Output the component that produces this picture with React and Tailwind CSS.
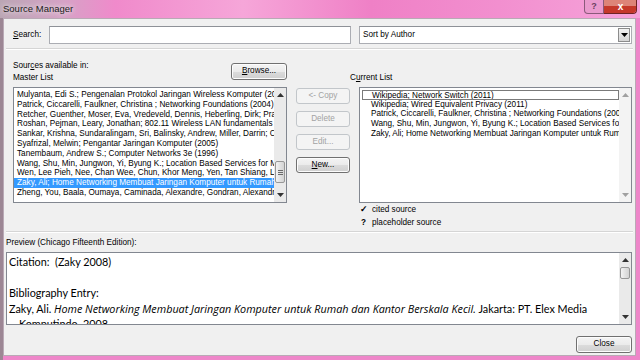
import React from "react";

const UI = { fontFamily: '"Liberation Sans", Arial, sans-serif' };
const PV = { fontFamily: 'Lato, "Open Sans", sans-serif' };
const PVI = { fontFamily: '"Open Sans", Lato, sans-serif' };

function Btn({ children, disabled, className = "" }) {
  return (
    <div
      className={
        "flex items-center justify-center rounded-[3px] border text-[8.2px] " +
        (disabled
          ? "border-[#c2c6ca] bg-[#f4f4f4] text-[#a3a3a3] "
          : "border-[#707070] bg-[linear-gradient(180deg,#f4f4f4_0%,#ebebeb_50%,#dcdcdc_51%,#cfcfcf_100%)] text-black shadow-[inset_0_0_0_1px_#fcfcfc] ") +
        className
      }
    >
      {children}
    </div>
  );
}

function Up({ color = "#333" }) {
  return (
    <svg width="7" height="4" viewBox="0 0 7 4">
      <path d="M0 4 L3.5 0 L7 4 Z" fill={color} />
    </svg>
  );
}
function Down({ color = "#333" }) {
  return (
    <svg width="7" height="4" viewBox="0 0 7 4">
      <path d="M0 0 L3.5 4 L7 0 Z" fill={color} />
    </svg>
  );
}

function Thumb({ h, grip }) {
  return (
    <div
      className="mx-[1px] flex items-center justify-center rounded-[2px] border border-[#979797] bg-[linear-gradient(90deg,#f3f3f3,#e2e2e2_50%,#d3d3d3)]"
      style={{ height: h }}
    >
      {grip && (
        <div className="flex flex-col gap-[1px]">
          <div className="h-[1px] w-[5px] bg-[#6a6a6a]" />
          <div className="h-[1px] w-[5px] bg-[#6a6a6a]" />
          <div className="h-[1px] w-[5px] bg-[#6a6a6a]" />
        </div>
      )}
    </div>
  );
}

const master = [
  "Mulyanta, Edi S.; Pengenalan Protokol Jaringan Wireless Komputer (2005)",
  "Patrick, Ciccarelli, Faulkner, Christina ; Networking Foundations (2004)",
  "Retcher, Guenther, Moser, Eva, Vredeveld, Dennis, Heberling, Dirk; Practical",
  "Roshan, Pejman, Leary, Jonathan; 802.11 Wireless LAN fundamentals (2004)",
  "Sankar, Krishna, Sundaralingam, Sri, Balinsky, Andrew, Miller, Darrin; Cisco",
  "Syafrizal, Melwin; Pengantar Jaringan Komputer (2005)",
  "Tanembaum, Andrew S.; Computer Networks 3e (1996)",
  "Wang, Shu, Min, Jungwon, Yi, Byung K.; Location Based Services for Mobiles",
  "Wen, Lee Pieh, Nee, Chan Wee, Chun, Khor Meng, Yen, Tan Shiang, Ling",
  "Zaky, Ali; Home Networking Membuat Jaringan Komputer untuk Rumah dan Kantor",
  "Zheng, You, Baala, Oumaya, Caminada, Alexandre, Gondran, Alexandre; Wireless",
];

const current = [
  "Wikipedia; Network Switch (2011)",
  "Wikipedia; Wired Equivalent Privacy (2011)",
  "Patrick, Ciccarelli, Faulkner, Christina ; Networking Foundations (2004)",
  "Wang, Shu, Min, Jungwon, Yi, Byung K.; Location Based Services for Mobiles",
  "Zaky, Ali; Home Networking Membuat Jaringan Komputer untuk Rumah",
];

export default function App() {
  return (
    <div
      className="flex h-[360px] w-[640px] flex-col overflow-hidden bg-[#ee86c9] text-black"
      style={UI}
    >
      {/* title bar */}
      <div className="flex h-[18px] shrink-0 items-start bg-[linear-gradient(90deg,#bba6b4_0%,#d6a2c6_10%,#f08acb_18%,#f6a6d9_38%,#ef80c6_58%,#f28fcf_78%,#f6a4da_100%)]">
        <div className="ml-[3px] mt-[3px] text-[9.5px] leading-[12px] text-[#1b1b1b] [text-shadow:0_0_4px_#e8e0e6,0_0_6px_#e8e0e6]">
          Source Manager
        </div>
        <div className="ml-auto mr-[3px] flex h-[14px] shrink-0">
          <div className="flex w-[20px] shrink-0 items-center justify-center rounded-bl-[4px] border border-t-0 border-[#8a5a7a] bg-[#e99acd] text-[9px] font-bold text-[#6a4060]">
            ?
          </div>
          <div className="flex w-[33px] shrink-0 flex-col overflow-hidden rounded-br-[4px] border border-l-0 border-t-0 border-[#6e2424]">
            <div className="h-[6px] bg-[#dd8478]" />
            <div className="flex-1 bg-[#c5382a]" />
          </div>
        </div>
      </div>
      <div className="relative -mt-[18px] flex h-[18px] shrink-0 justify-end pr-[3px]">
        <div className="flex h-[14px] w-[33px] items-center justify-center text-[10px] font-bold leading-[10px] text-white">
          x
        </div>
      </div>

      {/* body with frame */}
      <div className="flex min-h-0 flex-1">
        <div className="w-[3px] shrink-0 bg-[#9c8694]" />
        <div className="flex h-[338px] w-[633px] shrink-0 flex-col border border-[#b9a9b5] bg-[#f0f0f0]">
          {/* search row */}
          <div className="mt-[7px] flex h-[18px] items-center pl-[9px] pr-[3px]">
            <div className="w-[36px] text-[8.2px]">
              <span className="underline">S</span>earch:
            </div>
            <div className="h-[18px] w-[302px] border border-[#abadb3] border-t-[#8e9197] bg-white" />
            <div className="ml-[8px] flex h-[18px] w-[273px] items-center border border-[#abadb3] border-t-[#8e9197] bg-white">
              <div className="ml-[3px] flex-1 text-[8.2px]">Sort by Author</div>
              <div className="mr-[1px] flex h-[14px] w-[12px] items-center justify-center border border-[#8c8c8c] bg-[linear-gradient(180deg,#f2f2f2,#d5d5d5)]">
                <Down color="#000" />
              </div>
            </div>
          </div>

          <div className="mx-[2px] mt-[4px] h-[1px] bg-[#d5d5d5]" />
          <div className="mx-[2px] h-[1px] bg-white" />

          {/* header row */}
          <div className="flex h-[37px] pl-[9px] pr-[3px]">
            <div className="flex w-[274px] items-start">
              <div className="mt-[10px] text-[8.2px] leading-[12px]">
                <div>
                  Sour<span className="underline">c</span>es available in:
                </div>
                <div>Master List</div>
              </div>
              <Btn className="ml-auto mt-[13px] h-[17px] w-[56px]">
                <span>
                  <span className="underline">B</span>rowse...
                </span>
              </Btn>
            </div>
            <div className="w-[63px]" />
            <div className="flex w-[273px] items-end pb-[3px] text-[8.2px] leading-[12px]">
              <div>
                C<span className="underline">u</span>rrent List
              </div>
            </div>
          </div>

          {/* lists row */}
          <div className="flex h-[116px] pl-[9px] pr-[3px]">
            <div className="flex w-[274px] border border-[#828790] bg-white">
              <div className="min-w-0 flex-1 overflow-hidden pt-[2px]">
                {master.map((t, i) => (
                  <div
                    key={i}
                    className={
                      "h-[9.8px] overflow-hidden whitespace-nowrap pl-[3px] text-[8.2px] leading-[9.8px] " +
                      (i === 9 ? "bg-[#3399ff] text-white" : "")
                    }
                  >
                    {t}
                  </div>
                ))}
              </div>
              <div className="flex w-[12px] flex-col bg-[#eaeaea]">
                <div className="flex h-[14px] items-center justify-center">
                  <Up />
                </div>
                <div className="flex-1" />
                <div className="mb-[5px]">
                  <Thumb h={22} grip />
                </div>
                <div className="flex h-[14px] items-center justify-center">
                  <Down />
                </div>
              </div>
            </div>

            <div className="ml-[9px] flex w-[54px] flex-col pt-[1px]">
              <Btn disabled className="h-[16px]">
                &lt;- Copy
              </Btn>
              <Btn disabled className="mt-[7px] h-[16px]">
                Delete
              </Btn>
              <Btn disabled className="mt-[7px] h-[16px]">
                Edit...
              </Btn>
              <Btn className="mt-[7px] h-[16px]">
                <span>
                  <span className="underline">N</span>ew...
                </span>
              </Btn>
            </div>

            <div className="ml-[9px] flex w-[273px] border border-[#828790] bg-white">
              <div className="min-w-0 flex-1 overflow-hidden pl-[2px] pt-[2px]">
                {current.map((t, i) => (
                  <div
                    key={i}
                    className={
                      "h-[9.7px] overflow-hidden whitespace-nowrap pl-[9px] text-[8.2px] leading-[9px] " +
                      (i === 0 ? "border border-[#7a7a7a] pl-[8px]" : "")
                    }
                  >
                    {t}
                  </div>
                ))}
              </div>
              <div className="flex w-[12px] flex-col bg-[#f3f3f3]">
                <div className="flex h-[14px] items-center justify-center">
                  <Up color="#a0a0a0" />
                </div>
                <div className="flex-1" />
                <div className="flex h-[14px] items-center justify-center">
                  <Down color="#a0a0a0" />
                </div>
              </div>
            </div>
          </div>

          {/* legend */}
          <div className="flex pr-[3px]">
            <div className="ml-[355px] text-[8.2px] leading-[13px]">
              <div className="flex">
                <span className="w-[13px] pl-[1px] text-[9px] font-bold">✓</span>
                <span>cited source</span>
              </div>
              <div className="flex">
                <span className="w-[13px] pl-[2px] font-bold">?</span>
                <span>placeholder source</span>
              </div>
            </div>
          </div>

          <div className="mx-[2px] mt-[2px] h-[1px] bg-[#d5d5d5]" />
          <div className="mx-[2px] h-[1px] bg-white" />

          {/* preview */}
          <div className="mt-[4px] pl-[2px] text-[8.2px] leading-[12px]">
            Preview (Chicago Fifteenth Edition):
          </div>
          <div className="ml-[2px] mt-[3px] flex h-[73px] w-[626px] border border-[#828790] bg-white">
            <div
              className="min-w-0 flex-1 overflow-hidden pl-[2px] pt-[1px] text-[10.8px] leading-[15.5px]"
              style={PV}
            >
              <div>Citation:&nbsp; (Zaky 2008)</div>
              <div>&nbsp;</div>
              <div>Bibliography Entry:</div>
              <div className="whitespace-nowrap">
                Zaky, Ali.{" "}
                <i className="text-[10.8px]" style={PVI}>
                  Home Networking Membuat Jaringan Komputer untuk Rumah dan Kantor Berskala Kecil.
                </i>{" "}
                Jakarta: PT. Elex Media
              </div>
              <div className="pl-[10px]">Komputindo, 2008.</div>
            </div>
            <div className="flex w-[12px] flex-col bg-[#eaeaea]">
              <div className="flex h-[14px] items-center justify-center">
                <Up />
              </div>
              <Thumb h={12} />
              <div className="flex-1" />
              <div className="flex h-[14px] items-center justify-center">
                <Down />
              </div>
            </div>
          </div>

          <div className="mt-[11px] flex pr-[3px]">
            <Btn className="ml-auto h-[17px] w-[56px]">Close</Btn>
          </div>
        </div>
        <div className="flex-1" />
      </div>
    </div>
  );
}
